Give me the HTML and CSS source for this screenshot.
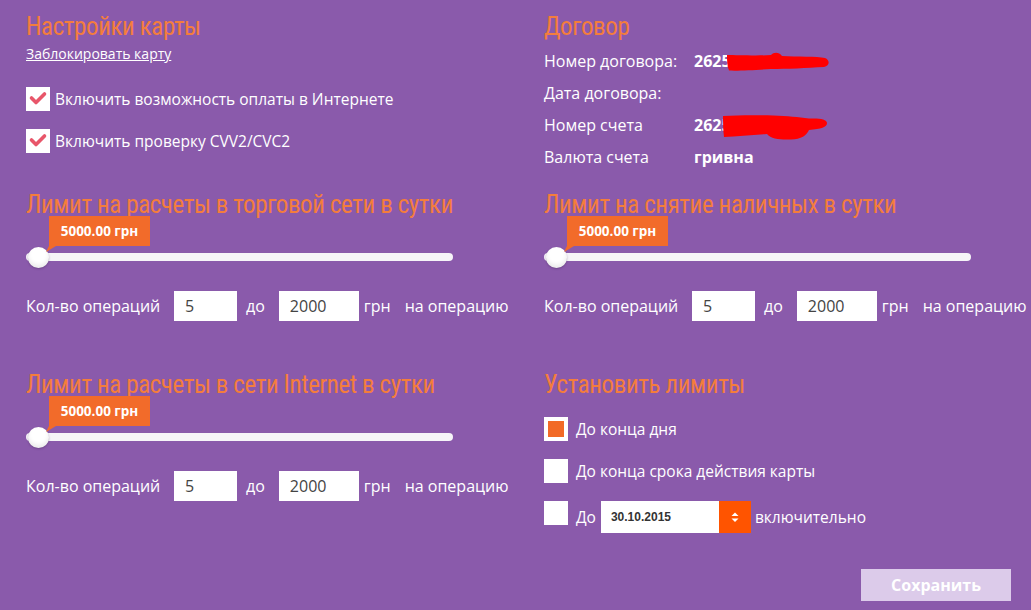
FILE: index.html
```html
<!DOCTYPE html>
<html lang="ru">
<head>
<meta charset="utf-8">
<title>Настройки карты</title>
<link rel="stylesheet" href="styles.css">
</head>
<body>
<div class="page">
  <section class="cell">
    <h2 class="title">Настройки карты</h2>
    <a class="block-link" href="#">Заблокировать карту</a>
    <label class="check-row first">
      <span class="check"><svg viewBox="0 0 24 24" width="24" height="24"><polyline points="5.5,11 10,15.5 18.5,7" fill="none" stroke="#e8566a" stroke-width="3.6" stroke-linecap="round" stroke-linejoin="round"/></svg></span>
      <span>Включить возможность оплаты в Интернете</span>
    </label>
    <label class="check-row">
      <span class="check"><svg viewBox="0 0 24 24" width="24" height="24"><polyline points="5.5,11 10,15.5 18.5,7" fill="none" stroke="#e8566a" stroke-width="3.6" stroke-linecap="round" stroke-linejoin="round"/></svg></span>
      <span>Включить проверку CVV2/CVC2</span>
    </label>
  </section>

  <section class="cell">
    <h2 class="title">Договор</h2>
    <dl class="info">
      <dt>Номер договора:</dt>
      <dd><span class="masked">2625<svg class="blob blob-1" viewBox="0 0 102 19" width="102" height="19"><path d="M0,3 C10,3 30,4 44,3 C47,0 52,0 55,4 C70,5 90,4 98,6 C103,8 103,14 97,15 C80,16 60,17 44,17 C30,18 10,19 2,18.5 C0,14 0,8 0,3 Z" fill="#ff0000"/></svg></span></dd>
      <dt>Дата договора:</dt>
      <dd></dd>
      <dt>Номер счета</dt>
      <dd><span class="masked">2625<svg class="blob blob-2" viewBox="0 0 105 27" width="105" height="27"><path d="M0,3 C15,2 35,2 50,2.5 C65,3 75,4 86,5.5 C96,5 104,6 104,10 C104,14 98,16 86,17 C84,22 78,26.5 68,26.5 C58,27 48,26 44,21 C30,22 14,23.5 1,24 C0,17 0,9 0,3 Z" fill="#ff0000"/></svg></span></dd>
      <dt>Валюта счета</dt>
      <dd>гривна</dd>
    </dl>
  </section>

  <section class="cell">
    <h2 class="title">Лимит на расчеты в торговой сети в сутки</h2>
    <div class="slider">
      <div class="track"></div>
      <span class="thumb"></span>
      <span class="bubble">5000.00 грн</span>
    </div>
    <div class="ops">
      <span class="ops-label">Кол-во операций</span>
      <input class="num" type="text" value="5">
      <span class="to">до</span>
      <input class="num wide" type="text" value="2000">
      <span class="unit">грн</span>
      <span class="per">на операцию</span>
    </div>
  </section>

  <section class="cell">
    <h2 class="title">Лимит на снятие наличных в сутки</h2>
    <div class="slider">
      <div class="track"></div>
      <span class="thumb"></span>
      <span class="bubble">5000.00 грн</span>
    </div>
    <div class="ops">
      <span class="ops-label">Кол-во операций</span>
      <input class="num" type="text" value="5">
      <span class="to">до</span>
      <input class="num wide" type="text" value="2000">
      <span class="unit">грн</span>
      <span class="per">на операцию</span>
    </div>
  </section>

  <section class="cell">
    <h2 class="title">Лимит на расчеты в сети Internet в сутки</h2>
    <div class="slider">
      <div class="track"></div>
      <span class="thumb"></span>
      <span class="bubble">5000.00 грн</span>
    </div>
    <div class="ops">
      <span class="ops-label">Кол-во операций</span>
      <input class="num" type="text" value="5">
      <span class="to">до</span>
      <input class="num wide" type="text" value="2000">
      <span class="unit">грн</span>
      <span class="per">на операцию</span>
    </div>
  </section>

  <section class="cell periods">
    <h2 class="title">Установить лимиты</h2>
    <div class="option first">
      <span class="box on"></span>
      <span class="opt-label">До конца дня</span>
    </div>
    <div class="option">
      <span class="box"></span>
      <span class="opt-label">До конца срока действия карты</span>
    </div>
    <div class="option top">
      <span class="box"></span>
      <span class="opt-label tall">До</span>
      <div class="date">
        <span class="date-field">30.10.2015</span>
        <span class="spin"><svg viewBox="0 0 32 32" width="32" height="32"><polygon points="12.5,15 16,11.5 19.5,15" fill="#fff"/><polygon points="12.5,17.5 19.5,17.5 16,21" fill="#fff"/></svg></span>
      </div>
      <span class="opt-label tall after">включительно</span>
    </div>
    <button class="save" type="button">Сохранить</button>
  </section>
</div>
</body>
</html>
```

FILE: styles.css
```css
html, body {
  margin: 0;
  padding: 0;
}
body {
  background: #8a5aab;
  color: #ffffff;
  font-family: "Open Sans", "Noto Sans", sans-serif;
  font-size: 16px;
  width: 1031px;
  height: 610px;
  overflow: hidden;
}
.page {
  display: grid;
  grid-template-columns: 518px 487px;
  grid-template-rows: 178px 180px auto;
  padding-left: 26px;
}
.cell {
  padding-top: 15px;
  display: flex;
  flex-direction: column;
  align-items: flex-start;
}
.title {
  margin: 0;
  font-family: "Roboto Condensed", Roboto, sans-serif;
  font-stretch: condensed;
  font-weight: 400;
  font-size: 25px;
  line-height: 24px;
  letter-spacing: -0.4px;
  color: #f47d3c;
  white-space: nowrap;
}
.block-link {
  margin-top: 5px;
  font-size: 14px;
  line-height: 20px;
  color: #ffffff;
  text-decoration: underline;
}
.check-row {
  display: flex;
  align-items: center;
  gap: 5px;
  height: 24px;
  margin-top: 18px;
  line-height: 24px;
  font-size: 15.5px;
}
.check-row.first {
  margin-top: 23px;
}
.check {
  width: 24px;
  height: 24px;
  background: #ffffff;
  display: block;
}
.check svg {
  display: block;
}

.info {
  margin: 6px 0 0;
  display: grid;
  grid-template-columns: 150px auto;
  grid-auto-rows: 32px;
  line-height: 32px;
}
.info dt {
  margin: 0;
}
.info dd {
  margin: 0;
  font-weight: 700;
}
.masked {
  position: relative;
  display: inline-block;
}
.blob {
  position: absolute;
  display: block;
}
.blob-1 {
  left: 33px;
  top: 7px;
}
.blob-2 {
  left: 29px;
  top: 4px;
}

.slider {
  position: relative;
  width: 427px;
  padding-top: 37px;
  margin-top: -1px;
}
.track {
  height: 8px;
  border-radius: 4px;
  background: #f6f4f8;
}
.thumb {
  position: absolute;
  left: 2px;
  top: 31px;
  width: 21px;
  height: 21px;
  border-radius: 50%;
  background: #ffffff;
  box-shadow: 0 1px 2px rgba(60, 30, 80, 0.35), inset 0 -3px 4px rgba(0, 0, 0, 0.08);
}
.bubble {
  position: absolute;
  left: 23px;
  top: 0;
  width: 101px;
  height: 30px;
  background: #f26b2a;
  color: #ffffff;
  font-weight: 700;
  font-size: 13.5px;
  line-height: 30px;
  text-align: center;
}
.bubble::after {
  content: "";
  position: absolute;
  left: -3px;
  top: 30px;
  width: 10px;
  height: 6px;
  background: #f26b2a;
  clip-path: polygon(3px 0, 10px 0, 0 6px);
}

.ops {
  display: flex;
  align-items: center;
  height: 30px;
  margin-top: 30px;
  white-space: nowrap;
}
.ops-label {
  width: 148px;
}
.num {
  box-sizing: border-box;
  width: 63px;
  height: 30px;
  border: 0;
  margin: 0;
  padding: 0 0 0 11px;
  background: #ffffff;
  color: #444444;
  font-family: "Open Sans", "Noto Sans", sans-serif;
  font-size: 16px;
  outline: none;
}
.num.wide {
  width: 80px;
}
.to {
  margin: 0 14px 0 9px;
}
.unit {
  margin-left: 5px;
}
.per {
  margin-left: 14px;
}

.option {
  display: flex;
  align-items: center;
  margin-top: 18px;
  white-space: nowrap;
  font-size: 15.5px;
}
.option.first {
  margin-top: 20px;
}
.option.top {
  align-items: flex-start;
}
.box {
  box-sizing: border-box;
  width: 24px;
  height: 24px;
  background: #ffffff;
  display: block;
  margin-right: 8px;
}
.box.on {
  border: 4px solid #ffffff;
  background: #f26a26;
}
.opt-label {
  line-height: 24px;
}
.opt-label.tall {
  line-height: 32px;
}
.opt-label.after {
  margin-left: 4px;
}
.date {
  display: flex;
  margin-left: 5px;
}
.date-field {
  box-sizing: border-box;
  width: 118px;
  height: 32px;
  padding-left: 10px;
  background: #ffffff;
  color: #333333;
  font-family: "Liberation Sans", Arial, sans-serif;
  font-weight: 700;
  font-size: 12px;
  line-height: 32px;
}
.spin {
  width: 32px;
  height: 32px;
  background: #ff5400;
  display: block;
}
.spin svg {
  display: block;
}
.save {
  display: block;
  align-self: flex-end;
  margin: 36px 20px 0 0;
  width: 150px;
  height: 32px;
  border: 0;
  padding: 0;
  background: #dccbea;
  color: #ffffff;
  font-family: "Open Sans", "Noto Sans", sans-serif;
  font-weight: 700;
  font-size: 16px;
  cursor: pointer;
}
```
